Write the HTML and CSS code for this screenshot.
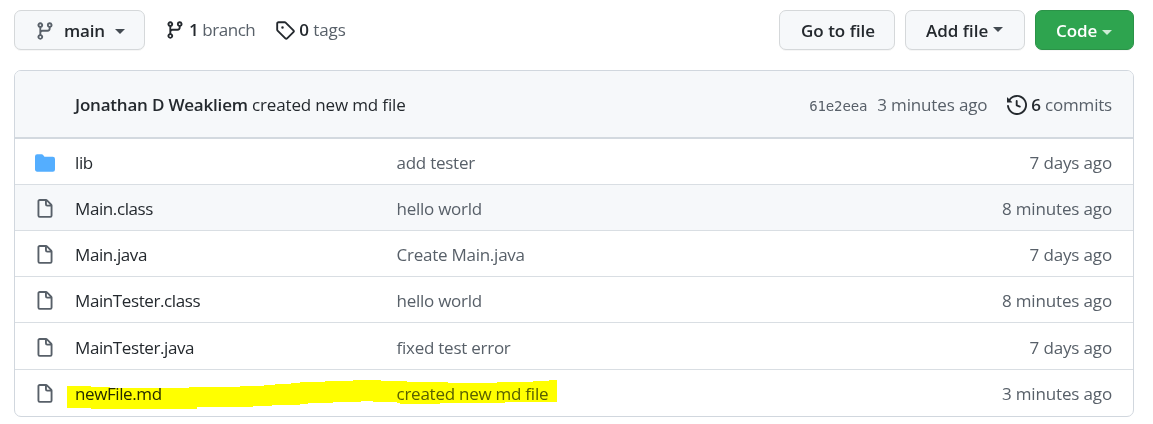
FILE: index.html
```html
<!DOCTYPE html>
<html lang="en">
<head>
<meta charset="utf-8">
<title>Repository files</title>
<link rel="stylesheet" href="styles.css">
</head>
<body>
<svg class="defs" width="0" height="0">
  <symbol id="branch" viewBox="0 0 16 16"><path fill-rule="evenodd" d="M11.75 2.5a.75.75 0 100 1.5.75.75 0 000-1.5zm-2.25.75a2.25 2.25 0 113 2.122V6A2.5 2.5 0 0110 8.5H6a1 1 0 00-1 1v1.128a2.251 2.251 0 11-1.5 0V5.372a2.25 2.25 0 111.5 0v1.836A2.492 2.492 0 016 7h4a1 1 0 001-1v-.628A2.25 2.25 0 019.5 3.25zM4.25 12a.75.75 0 100 1.5.75.75 0 000-1.5zM3.5 3.25a.75.75 0 111.5 0 .75.75 0 01-1.5 0z"/></symbol>
  <symbol id="tag" viewBox="0 0 16 16"><path fill-rule="evenodd" d="M2.5 7.775V2.75a.25.25 0 01.25-.25h5.025a.25.25 0 01.177.073l6.25 6.25a.25.25 0 010 .354l-5.025 5.025a.25.25 0 01-.354 0l-6.25-6.25a.25.25 0 01-.073-.177zm-1.5 0V2.75C1 1.784 1.784 1 2.75 1h5.025c.464 0 .91.184 1.238.513l6.25 6.25a1.75 1.75 0 010 2.474l-5.026 5.026a1.75 1.75 0 01-2.474 0l-6.25-6.25A1.75 1.75 0 011 7.775zM6 5a1 1 0 100 2 1 1 0 000-2z"/></symbol>
  <symbol id="history" viewBox="0 0 16 16"><path fill-rule="evenodd" d="M1.643 3.143L.427 1.927A.25.25 0 000 2.104V5.75c0 .138.112.25.25.25h3.646a.25.25 0 00.177-.427L2.715 4.215a6.5 6.5 0 11-1.18 4.458.75.75 0 10-1.493.154 8.001 8.001 0 101.6-5.684zM7.75 4a.75.75 0 01.75.75v2.992l2.028.812a.75.75 0 01-.557 1.392l-2.5-1A.75.75 0 017 8.25v-3.5A.75.75 0 017.75 4z"/></symbol>
  <symbol id="folder" viewBox="0 0 16 16"><path d="M1.75 1A1.75 1.75 0 000 2.75v10.5C0 14.216.784 15 1.75 15h12.5A1.75 1.75 0 0016 13.25v-8.5A1.75 1.75 0 0014.25 3h-6.5a.25.25 0 01-.2-.1l-.9-1.2c-.33-.44-.85-.7-1.4-.7h-3.5z"/></symbol>
  <symbol id="file" viewBox="0 0 16 16"><path fill-rule="evenodd" d="M3.75 1.5a.25.25 0 00-.25.25v11.5c0 .138.112.25.25.25h8.5a.25.25 0 00.25-.25V6H9.75A1.75 1.75 0 018 4.25V1.5H3.75zm5.75.56v2.19c0 .138.112.25.25.25h2.19L9.5 2.06zM2 1.75C2 .784 2.784 0 3.75 0h5.086c.464 0 .909.184 1.237.513l3.414 3.414c.329.328.513.773.513 1.237v8.086A1.75 1.75 0 0112.25 15h-8.5A1.75 1.75 0 012 13.25V1.75z"/></symbol>
</svg>
<div class="page">
  <div class="toolbar">
    <button class="btn btn-main"><svg class="icon icon-muted"><use href="#branch"/></svg><span>main</span><i class="caret"></i></button>
    <a class="stat stat-branch"><svg class="icon"><use href="#branch"/></svg><span><b>1</b> branch</span></a>
    <a class="stat stat-tags"><svg class="icon"><use href="#tag"/></svg><span><b>0</b> tags</span></a>
    <div class="actions">
      <button class="btn btn-goto">Go to file</button>
      <button class="btn btn-add">Add file<i class="caret"></i></button>
      <button class="btn btn-code">Code<i class="caret"></i></button>
    </div>
  </div>
  <div class="card">
    <div class="head">
      <div class="commit"><b>Jonathan D Weakliem</b> <span class="title">created new md file</span></div>
      <code class="sha">61e2eea</code>
      <span class="when">3 minutes ago</span>
      <span class="commits"><svg class="icon"><use href="#history"/></svg><span><b>6</b> commits</span></span>
    </div>
    <div class="row"><svg class="icon icon-folder"><use href="#folder"/></svg><span class="name">lib</span><span class="msg">add tester</span><span class="age">7 days ago</span></div>
    <div class="row row-active"><svg class="icon icon-muted"><use href="#file"/></svg><span class="name">Main.class</span><span class="msg">hello world</span><span class="age">8 minutes ago</span></div>
    <div class="row"><svg class="icon icon-muted"><use href="#file"/></svg><span class="name">Main.java</span><span class="msg">Create Main.java</span><span class="age">7 days ago</span></div>
    <div class="row"><svg class="icon icon-muted"><use href="#file"/></svg><span class="name">MainTester.class</span><span class="msg">hello world</span><span class="age">8 minutes ago</span></div>
    <div class="row row-tall"><svg class="icon icon-muted"><use href="#file"/></svg><span class="name">MainTester.java</span><span class="msg">fixed test error</span><span class="age">7 days ago</span></div>
    <div class="row row-last"><svg class="icon icon-muted"><use href="#file"/></svg><span class="name">newFile.md</span><span class="msg">created new md file</span><span class="age">3 minutes ago</span>
      <svg class="marker" viewBox="67 380 490 29"><path d="M67 386H91V387H110V388H189V387H218V387H240V386H264V385H275V384H291V383H300V382H325V381H353V380H381V381H407V382H448V383H497V382H533V381H549V380H557V402H545V402H505V403H440V404H400V403H397V402H373V401H361V402H333V403H308V404H300V405H272V406H253V407H197V409H91V408H67Z"/></svg>
    </div>
  </div>
</div>
</body>
</html>
```
FILE: styles.css
```css
* { box-sizing: border-box; }
body {
  margin: 0;
  background: #fff;
  color: #24292e;
  font: 17px/24px "Open Sans", "Noto Sans", sans-serif;
  letter-spacing: -0.25px;
  white-space: nowrap;
}
b { font-weight: 600; }
.defs { display: block; height: 0; }
.page { width: 1153px; height: 424px; padding: 10px 19px 0 14px; overflow: hidden; }
.icon { width: 20px; height: 20px; flex: none; fill: #24292e; }
.icon-muted { fill: #586069; }
.icon-folder { fill: #54aeff; }
.toolbar { display: flex; height: 40px; }
.btn {
  display: flex;
  align-items: center;
  height: 40px;
  padding: 1px 20px 0;
  border: 1px solid #d5d8da;
  border-radius: 7px;
  background: #f6f8fa;
  box-shadow: 0 1px 0 rgba(27, 31, 35, .04);
  color: #24292e;
  font: inherit;
  font-weight: 560;
  letter-spacing: 0;
}
.btn-main { width: 131px; }
.btn-main span { margin-left: 9px; letter-spacing: -0.2px; }
.btn-goto { width: 116px; padding-left: 21px; }
.btn-add { width: 120px; }
.btn-code { width: 99px; background: #2ea44f; border-color: #2b9348; color: #fff; font-weight: 650; letter-spacing: -0.1px; }
.caret {
  flex: none;
  margin-left: 5px;
  border: 5px solid transparent;
  border-top-color: #444b52;
  border-bottom: 0;
}
.btn-main .caret { margin-left: 10px; margin-top: 2px; }
.btn-add .caret { margin-top: -3px; }
.btn-code .caret { margin-top: 3px; border-top-color: #cdebd5; }
.stat { display: flex; align-items: center; height: 40px; color: #586069; letter-spacing: -0.45px; }
.stat b, .commits b { color: #24292e; }
.stat span { margin-left: 4px; }
.stat-branch { margin-left: 20px; }
.stat-tags { margin-left: 20px; letter-spacing: -0.1px; }
.actions { display: flex; gap: 10px; margin-left: auto; }
.card { margin-top: 20px; border: 1px solid #d1d7de; border-radius: 7px; }
.head {
  display: flex;
  align-items: center;
  height: 68px;
  padding: 2px 21px 0 60px;
  border-bottom: 2px solid #d3d9df;
  border-radius: 6px 6px 0 0;
  background: #f6f8fa;
}
.commit { flex: 1; letter-spacing: -0.2px; }
.title { letter-spacing: -0.15px; }
.sha { margin: 2px 10px 0 0; color: #586069; font: 14px/20px "DejaVu Sans Mono", monospace; letter-spacing: -0.15px; }
.when, .commits, .msg, .age { color: #586069; }
.when, .age { letter-spacing: -0.15px; }
.commits { display: flex; align-items: center; margin-left: 20px; letter-spacing: -0.2px; }
.commits span { margin-left: 4px; }
.row {
  position: relative;
  display: grid;
  grid-template-columns: 40px 321.5px 1fr auto;
  align-items: center;
  height: 46px;
  padding: 2px 21px 0 20px;
  border-bottom: 1px solid #d9dee3;
}
.name { letter-spacing: -0.4px; }
.row-active { background: #f6f8fa; }
.row-tall { height: 47px; padding-top: 3px; }
.row-last { border-bottom: 0; }
.marker {
  position: absolute;
  left: 52px;
  top: 10px;
  width: 490px;
  height: 29px;
  fill: #ff0;
  mix-blend-mode: multiply;
}
```
